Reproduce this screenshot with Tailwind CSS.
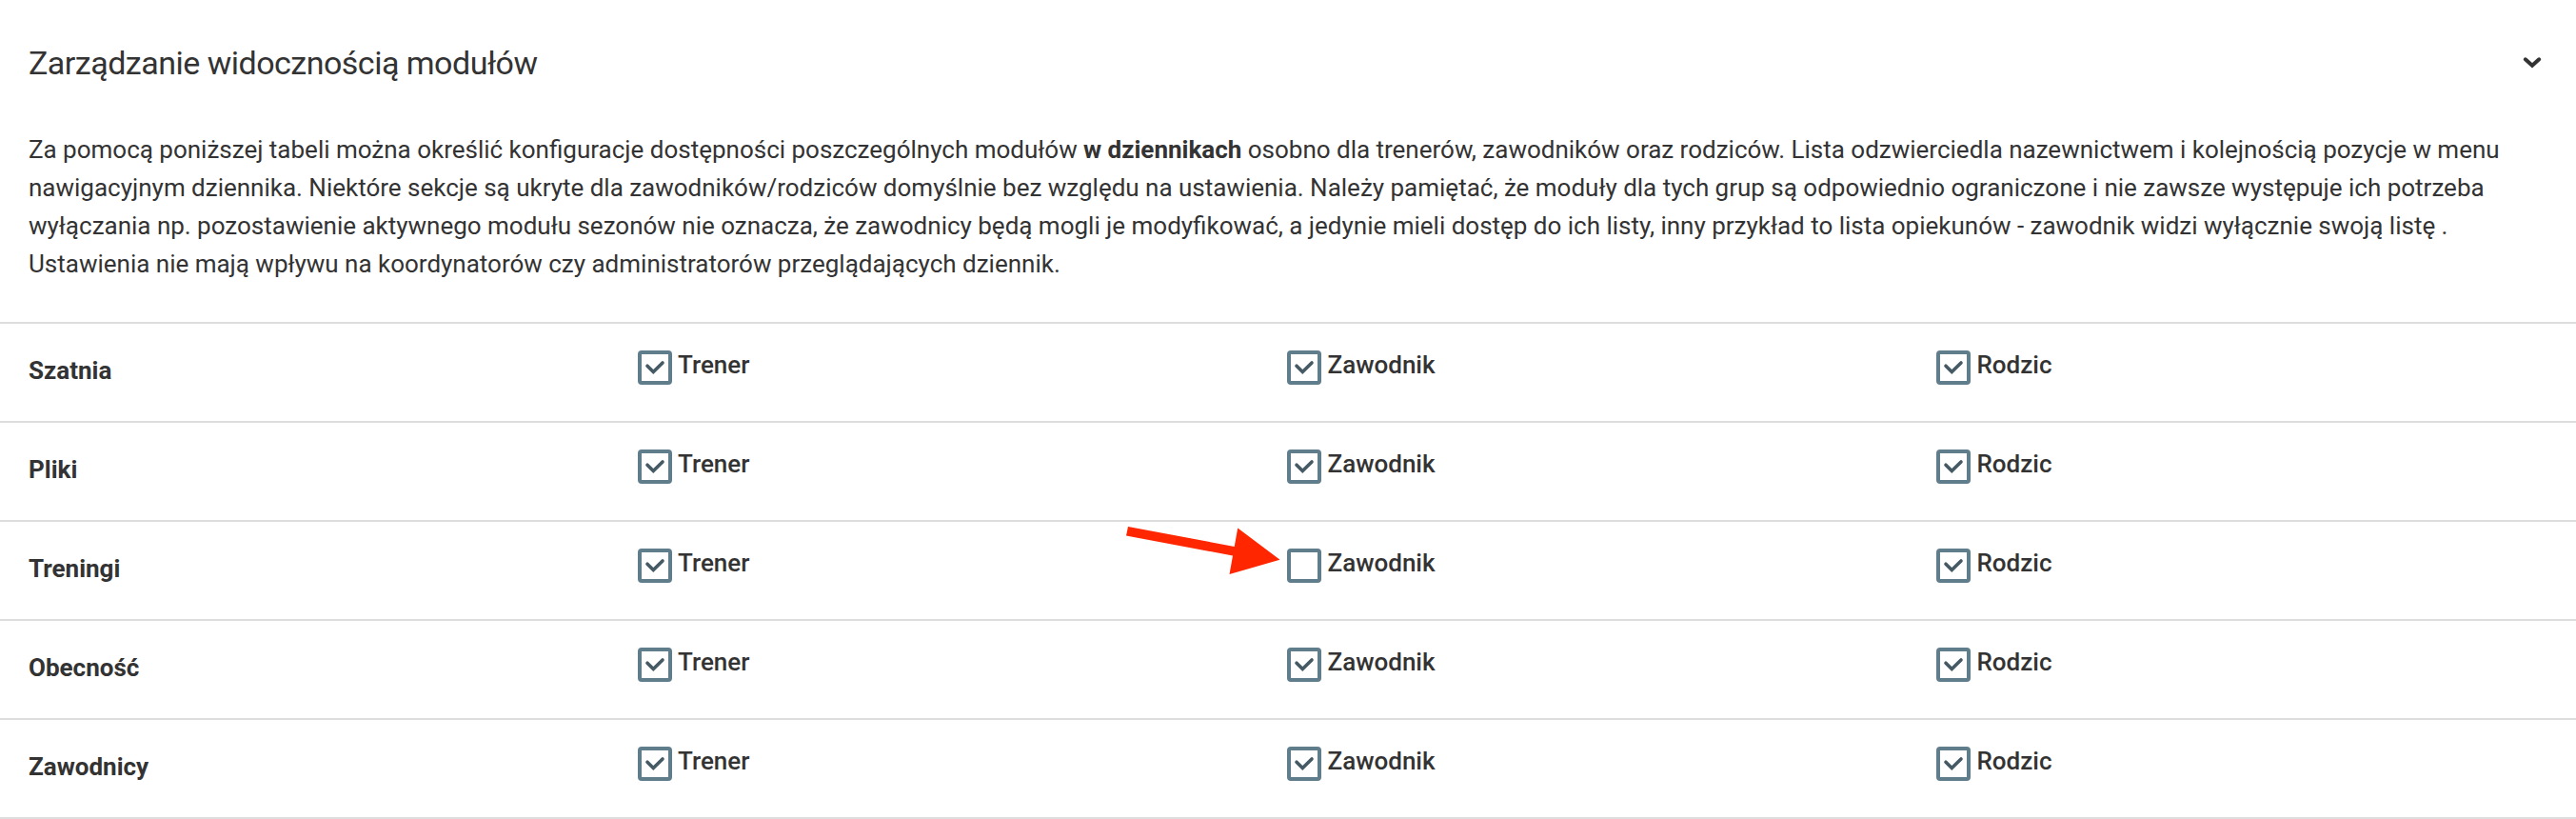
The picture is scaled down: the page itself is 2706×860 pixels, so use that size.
<!DOCTYPE html>
<html lang="pl">
<head>
<meta charset="utf-8">
<title>Zarządzanie widocznością modułów</title>
<script src="https://cdn.jsdelivr.net/npm/@tailwindcss/browser@4"></script>
</head>
<body class="bg-white font-['Roboto',sans-serif] text-[#333333] text-[26px] leading-10">
<main class="w-[2706px] h-[860px] overflow-hidden flex flex-col">
  <header class="h-[137px] shrink-0 pt-[46px] pl-[30px] pr-[34px] flex items-start justify-between">
    <h1 class="text-[34px] leading-10 tracking-[-0.51px]">Zarządzanie widocznością modułów</h1>
    <svg class="w-6 h-6 mt-2" viewBox="0 0 24 24" fill="none" stroke="#333333" stroke-width="4" stroke-linecap="round" stroke-linejoin="miter"><path d="M4.8 8.3 12 14.7 19.2 8.3"/></svg>
  </header>
  <p class="h-[201px] shrink-0 pl-[30px] whitespace-nowrap [word-spacing:-0.055px]">Za pomocą poniższej tabeli można określić konfiguracje dostępności poszczególnych modułów <b class="font-bold">w dziennikach</b> osobno dla trenerów, zawodników oraz rodziców. Lista odzwierciedla nazewnictwem i kolejnością pozycje w menu<br>nawigacyjnym dziennika. Niektóre sekcje są ukryte dla zawodników/rodziców domyślnie bez względu na ustawienia. Należy pamiętać, że moduły dla tych grup są odpowiednio ograniczone i nie zawsze występuje ich potrzeba<br>wyłączania np. pozostawienie aktywnego modułu sezonów nie oznacza, że zawodnicy będą mogli je modyfikować, a jedynie mieli dostęp do ich listy, inny przykład to lista opiekunów - zawodnik widzi wyłącznie swoją listę .<br>Ustawienia nie mają wpływu na koordynatorów czy administratorów przeglądających dziennik.</p>
  <section id="rows" class="border-t-2 border-[#dddddd]"></section>
</main>
<svg class="absolute left-[1180px] top-[550px] w-[168px] h-[56px]" viewBox="0 0 168 56"><path fill="#ff2600" d="M5 3 116.7 24 120.2 4.5 164.5 37.7 111.5 53 115 33.5 3 12.5Z"/></svg>
<script>
const roles = ['Trener', 'Zawodnik', 'Rodzic'];
const gaps = ['gap-[6px]', 'gap-[6.5px]', 'gap-[6.5px]'];
const modules = [['Szatnia',1,1,1],['Pliki',1,1,1],['Treningi',1,0,1],['Obecność',1,1,1],['Zawodnicy',1,1,1]];
const tick = '<svg class="w-7 h-7" viewBox="0 0 28 28" fill="none" stroke="#455a64" stroke-width="3.6" stroke-linecap="round"><path d="M6 12.2 12.3 18.5 22 9"/></svg>';
document.getElementById('rows').innerHTML = modules.map(([name, ...on]) => `
  <div class="h-[104px] pl-[30px] grid grid-cols-[640px_682px_682px_1fr] items-start border-b-2 border-[#dddddd]">
    <div class="pt-[29px] font-bold">${name}</div>
    ${roles.map((r, i) => `
    <div class="pt-[23px] flex ${gaps[i]}">
      <span class="mt-[5px] w-9 h-9 shrink-0 rounded border-4 border-[#607d8b]">${on[i] ? tick : ''}</span>
      <span class="font-medium">${r}</span>
    </div>`).join('')}
  </div>`).join('');
</script>
</body>
</html>
